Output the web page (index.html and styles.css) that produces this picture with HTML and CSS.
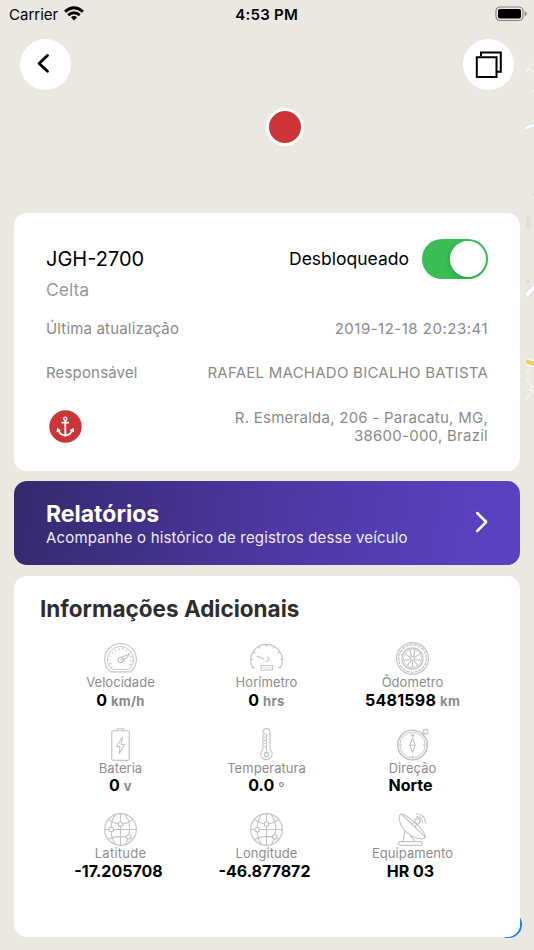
FILE: index.html
```html
<!DOCTYPE html>
<html lang="pt-BR">
<head>
<meta charset="utf-8">
<title>JGH-2700</title>
<link rel="stylesheet" href="styles.css">
</head>
<body>
<svg width="0" height="0" class="defs" aria-hidden="true">
  <symbol id="globe" viewBox="0 0 32 32">
    <circle cx="16" cy="16" r="15.4"/>
    <path d="M16 .6v8M16 13v18.4M.6 16h4.2M9.2 16h22.2M4 6.2q4.600 3.600 9.600 4.200M18.300 10.500q5.300-.6 9.700-4.300M4 25.800q8-4.300 17.500-2.600M25.800 24.300l2.200 1.500M11.300 1.400C8.400 5 7.200 9.300 7 13.700M7 18.400c.3 5 1.800 9.300 4.300 12.200M20.700 1.400c3.700 5.700 5 13.500 3.500 19.400M23 25.400q-.8 3-2.300 5.200"/>
    <circle cx="16" cy="10.700" r="2.200"/><circle cx="7" cy="16" r="2.200"/><circle cx="24" cy="23" r="2.200"/>
  </symbol>
</svg>
<main class="screen">
  <svg class="map" viewBox="0 0 8 400" fill="none" aria-hidden="true">
    <path d="M0 22q4-8 6-9M1 19l7 3M6 41h2" stroke="#fff" stroke-width=".8"/>
    <path d="M0 78l8-3" stroke="#d9d9ef" stroke-width="5"/><path d="M0 78l8-3" stroke="#fff" stroke-width="3"/>
    <path d="M0 165l6 1-2 6 2 6-6 2zM0 229h4v5H0zM5 143h3v3z" fill="#e1ded6"/>
    <path d="M0 246l8-9" stroke="#d5d5e9" stroke-width="6"/><path d="M0 246l8-9" stroke="#fff" stroke-width="4"/>
    <path d="M0 311l8 3" stroke="#fff" stroke-width="7"/><path d="M0 311l8 3" stroke="#f2cf5b" stroke-width="4.500"/>
    <path d="M0 323l4-6M0 329l8 12M0 350l6-9-6-2" stroke="#fff" stroke-width=".8"/>
  </svg>

  <header class="status">
    <div class="carrier"><span>Carrier</span>
      <svg width="20" height="15" viewBox="0 0 20 15" fill="none" stroke="#000" stroke-width="2.900"><path d="M1 5.700Q10-2.300 19 5.700M4.200 9.200Q10 4.200 15.800 9.200"/><path d="M10 14.400l-3.100-3.200q3.100-2.500 6.200 0z" fill="#000" stroke="none"/></svg>
    </div>
    <b class="clock">4:53 PM</b>
    <svg class="battery" width="33" height="16" viewBox="0 0 33 16"><rect x="1" y="1" width="27" height="13.500" rx="4" fill="none" stroke="#85837e" stroke-width="1.200"/><rect x="3" y="3" width="23" height="9.500" rx="2" /><path d="M29.700 5.500q2 .6 2 2.300t-2 2.300z" fill="#85837e"/></svg>
  </header>

  <nav class="controls">
    <button class="round" aria-label="Voltar"><svg width="51" height="51" viewBox="0 0 51 51" fill="none" stroke="#000" stroke-width="2.800" stroke-linecap="round" stroke-linejoin="round"><path d="M28.500 16.500l-8.400 8 8.400 7.700"/></svg></button>
    <button class="round" aria-label="Camadas"><svg width="51" height="51" viewBox="0 0 51 51" fill="none" stroke="#000" stroke-width="2"><path d="M18 17v-3.500h19.800v19.300h-4M13.800 18.300h19.700v19.800H13.800z"/></svg></button>
  </nav>
  <div class="marker"></div>
  <div class="locator"></div>

  <section class="card vehicle">
    <div class="top"><h1>JGH-2700</h1><div class="lock"><span>Desbloqueado</span><span class="switch"></span></div></div>
    <p class="model">Celta</p>
    <div class="row updated"><span>Última atualização</span><span class="date">2019-12-18 20:23:41</span></div>
    <div class="row owner"><span>Responsável</span><span class="name">RAFAEL MACHADO BICALHO BATISTA</span></div>
    <div class="row place">
      <svg class="anchor" width="33" height="33" viewBox="0 0 33 33" fill="none" stroke="#fff"><circle cx="16.500" cy="16.500" r="16.200" fill="#cb3538" stroke="none"/><circle cx="16.300" cy="8.700" r="1.600" stroke-width="1.300"/><path d="M16.300 10.500V25M12.600 12.600h7.400M9 19.500q1.500 5.500 7.300 5.700 5.800-.2 7.300-5.700" stroke-width="1.800"/><path d="M7.400 22.200l.7-4.500 3.900 2.500zM25.200 22.200l-.7-4.500-3.900 2.500zM14 25.200h4.600l-2.300 1.700z" fill="#fff" stroke="none"/></svg>
      <span class="address">R. Esmeralda, 206 - Paracatu, MG,<br>38600-000, Brazil</span>
    </div>
  </section>

  <a class="card reports">
    <div><h2>Relatórios</h2><p>Acompanhe o histórico de registros desse veículo</p></div>
    <svg width="14" height="22" viewBox="0 0 14 22" fill="none" stroke="#fff" stroke-width="2.500" stroke-linecap="round" stroke-linejoin="round"><path d="M2.200 2l9 9-9 9"/></svg>
  </a>

  <section class="card info">
    <h2>Informações Adicionais</h2>
    <div class="grid">
      <div class="item"><svg class="icon" viewBox="0 0 32 32"><path d="M6.500 29h19A15.400 15.400 0 1 0 6.500 29z"/><path d="M7.500 26.500A12.700 12.700 0 1 1 24.500 26.500z" stroke-width=".9"/><path d="M8 24.500a10.600 10.600 0 1 1 16 0" stroke-width="2" stroke-dasharray=".9 2.800"/><circle cx="16.200" cy="17.500" r="2.500"/><path d="M15.500 14.900l9-2.700-6 6.600M16 17.500l4-2.300"/></svg><span class="label">Velocidade</span><strong>0<small>km/h</small></strong></div>
      <div class="item"><svg class="icon" viewBox="0 0 32 32"><path d="M2.700 25.500a15.400 15.400 0 1 1 26.600 0M2.700 25.500l2-1.200M29.300 25.500l-2-1.200M.7 17h2.600M31.300 17h-2.600M3 9.500l2.200 1.300M29 9.500l-2.200 1.300M8.400 4l1.400 2.200M23.600 4l-1.400 2.200M16 2.200v2.600"/><path d="M6.500 13.500l7.500 3.200M15 18.500q2.500.8 3-1.300t-1.800-2.700"/><path d="M10.800 22.800h11v4.400h-11zM12.800 25h1.500M15.600 25h1.500M18.400 25h1.500"/></svg><span class="label">Horímetro</span><strong>0<small>hrs</small></strong></div>
      <div class="item"><svg class="icon" viewBox="0 0 32 32"><circle cx="16" cy="16" r="15.400"/><circle cx="16" cy="16" r="13.400" stroke-width="1.300" stroke-dasharray="3 1"/><circle cx="16" cy="16" r="10.300"/><circle cx="16" cy="16" r="8.700" stroke-width=".8"/><circle cx="16" cy="16" r="1.900"/><path d="M14.800 13.800l-1-6M17.200 13.800l1-6M18.200 14.700l5.200-3.200M18.500 17l6 .8M17.600 18l3.600 5M16 18.500v6M14.400 18l-3.600 5M13.500 17l-6 .8M13.800 14.700l-5.200-3.200"/></svg><span class="label">Ôdometro</span><strong class="wide">5481598<small>km</small></strong></div>

      <div class="item"><svg class="icon" viewBox="0 0 32 32"><rect x="7.500" y="2.700" width="17" height="28.700" rx="1.500"/><path d="M12.800 2.700V.7h6.400v2M17.800 9l-5.600 9h3.200l-.6 7 5.200-9h-3.300z"/></svg><span class="label">Bateria</span><strong>0<small>v</small></strong></div>
      <div class="item"><svg class="icon" viewBox="0 0 32 32"><path d="M12.600 20.800V4a3.400 3.400 0 0 1 6.800 0v16.800a5.500 5.500 0 1 1-6.800 0z"/><circle cx="16" cy="25.800" r="2.200"/><path d="M16 5.500v18M13.500 6h1.500M13.500 9h1.500M13.500 12h1.500M13.500 15h1.500M13.500 18h1.500"/></svg><span class="label">Temperatura</span><strong>0.0<small>º</small></strong></div>
      <div class="item"><svg class="icon" viewBox="0 0 32 32"><circle cx="16" cy="16.500" r="14.300" stroke-width="1.500"/><circle cx="16" cy="16.500" r="12.300" stroke-width=".9"/><circle cx="28.700" cy="3.600" r="2.300"/><path d="M16 10l2.700 6.700L16 23.500l-2.700-6.800zM13.300 16.700h5.400M14.900 8.200V5.900l2.200 2.300V5.900M16 26.500v2M4 16.500h2M26 16.500h2M26 6.300l2-1.500"/></svg><span class="label">Direção</span><strong>Norte<small></small></strong></div>

      <div class="item"><svg class="icon"><use href="#globe"/></svg><span class="label loose">Latitude</span><strong>-17.205708<small></small></strong></div>
      <div class="item"><svg class="icon"><use href="#globe"/></svg><span class="label">Longitude</span><strong>-46.877872<small></small></strong></div>
      <div class="item"><svg class="icon" viewBox="0 0 32 32"><path d="M5 .7C1 3.500 3.500 12.500 10.500 18.800S26 26.500 28.700 23.700zM5 .7C9 .2 28 16 28.700 23.700M8.700 17.500L6.500 27.700M13.500 21.200l5 6.500"/><rect x="2.500" y="27.700" width="23" height="3.700" rx="1.800"/><path d="M15 11l3.300-2.600M18 13.700l2.600-3.400M19 .7q9 0 9.800 9.500M19.500 3.500q6 .2 6.600 6.500"/><circle cx="20.800" cy="8" r="2.500"/></svg><span class="label">Equipamento</span><strong>HR 03<small></small></strong></div>
    </div>
  </section>
</main>
</body>
</html>
```
FILE: styles.css
```css
* { box-sizing: border-box; margin: 0; padding: 0; }
body { background: #ebe8e1; font-family: Inter, "Liberation Sans", sans-serif; color: #000; }
.defs { position: absolute; }
.screen { position: relative; height: 950px; overflow: hidden; padding: 0 13.600px 0 13.500px; }
.map { position: absolute; right: 0; top: 50px; width: 8px; height: 400px; }

.status { height: 28px; margin: 0 -8px 0 -4.500px; display: grid; grid-template-columns: 1fr auto 1fr; align-items: center; font-size: 15px; }
.carrier { display: flex; align-items: center; gap: 6px; }
.carrier svg { margin-top: -2px; }
.clock { font-weight: 600; font-size: 15px; letter-spacing: .25px; margin-left: -4px; }
.battery { justify-self: end; margin-top: -1px; }

.controls { display: flex; justify-content: space-between; margin: 11px 6.400px 0 6px; }
.round { width: 51px; height: 51px; border: 0; border-radius: 50%; background: #fff; }
.round svg { display: block; margin-left: -.5px; }
.marker { position: absolute; left: 266px; top: 108px; width: 38px; height: 38px; border-radius: 50%; border: 3px solid #fff; background: #cb3538; }
.locator { position: absolute; left: 495px; top: 911px; width: 27px; height: 27px; border: 2px solid #147efb; border-radius: 50%; background: #fff; }

.card { position: relative; border-radius: 13px; background: #fff; }
.vehicle { margin-top: 123px; height: 258px; padding: 26px 32.400px 0 32.500px; color: #8a8a8a; }
.top { display: flex; height: 40px; align-items: center; justify-content: space-between; color: #000; }
h1 { font-size: 20px; font-weight: 400; }
.lock { display: flex; align-items: center; gap: 13px; font-size: 17.500px; line-height: 20px; }
.lock > span:first-child { margin-top: -1px; }
.switch { width: 66px; height: 40px; border-radius: 20px; background: #38be55; padding: 2px; display: flex; justify-content: flex-end; }
.switch::after { content: ""; width: 36px; height: 36px; border-radius: 50%; background: #fff; box-shadow: -1px 2px 5px rgba(0,0,0,.15); }
.model { font-size: 17.500px; line-height: 22px; color: #999; }
.row { display: flex; justify-content: space-between; font-size: 15px; line-height: 22px; white-space: nowrap; letter-spacing: .17px; }
.date { letter-spacing: .5px; }
.name { letter-spacing: .25px; }
.address { letter-spacing: .26px; padding-top: 1px; }
.updated { margin-top: 17px; }
.owner { margin-top: 22px; }
.place { margin-top: 24px; line-height: 18px; align-items: center; text-align: right; }
.anchor { margin-left: 3px; }

.reports { margin-top: 10px; height: 84px; padding: 2px 31.400px 0 32.500px; display: flex; justify-content: space-between; align-items: center; color: #fff; background: linear-gradient(100deg, #34296d, #4c38a2 52%, #5942c0 92%); }
.reports h2 { font-size: 23px; line-height: 27px; font-weight: 700; }
.reports p { font-size: 15px; line-height: 20px; color: #eeecf8; letter-spacing: .16px; }
.reports svg { margin-top: -5px; }

.info { margin-top: 11px; height: 361px; padding: 19px 34px; }
.info h2 { margin-left: -7.500px; font-size: 22.500px; line-height: 28px; color: #2e2e2e; font-weight: 700; }
.grid { margin-top: 19px; display: grid; grid-template-columns: repeat(3, 146px); grid-auto-rows: 85.500px; }
.item { display: flex; flex-direction: column; align-items: center; }
.icon { width: 33px; height: 33px; flex: none; fill: none; stroke: #c4c4c4; stroke-width: 1.100; stroke-linejoin: round; }
.label { font-size: 13px; line-height: 16px; margin: -1px 0 .5px; color: #8d8d8d; letter-spacing: .04px; }
.loose { letter-spacing: .25px; }
strong { font-size: 16px; line-height: 19px; font-weight: 700; white-space: nowrap; }
.wide { letter-spacing: .25px; }
small { font-size: 13px; color: #8a8a8a; padding-left: 4px; letter-spacing: .3px; }
```
